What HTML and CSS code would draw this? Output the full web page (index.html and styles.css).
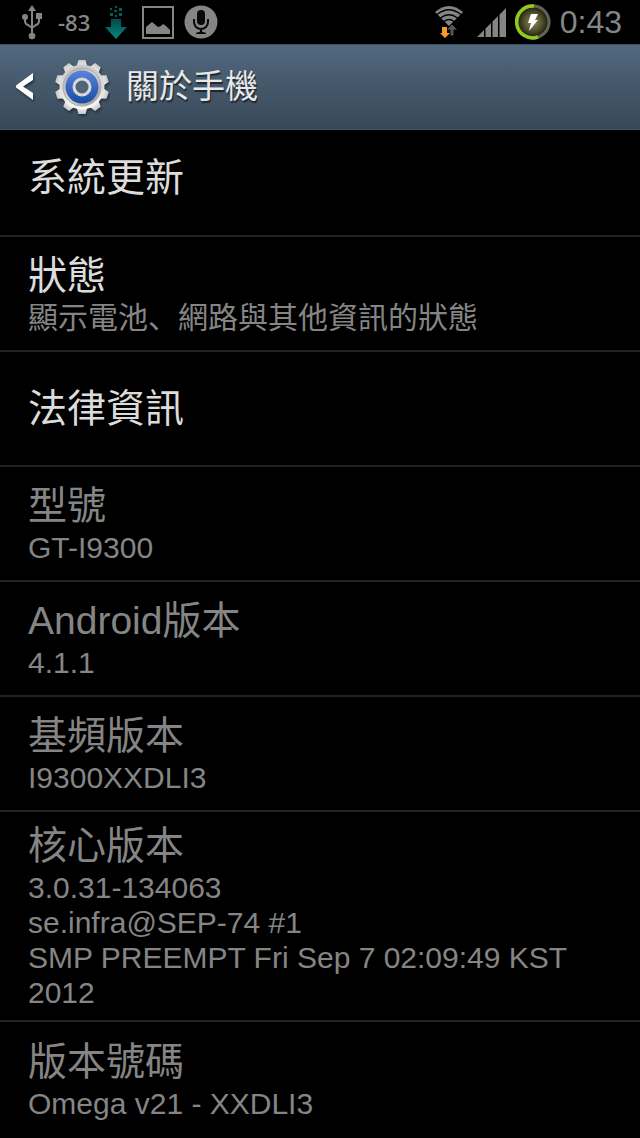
FILE: index.html
```html
<!DOCTYPE html>
<html lang="zh-Hant">
<head>
<meta charset="utf-8">
<meta name="viewport" content="width=device-width, initial-scale=1">
<title>關於手機</title>
<link rel="stylesheet" href="styles.css">
</head>
<body>
<div class="status-bar">
  <div class="status-group notifications">
    <svg class="icon-usb" viewBox="0 0 22 36" width="22" height="36" aria-hidden="true">
      <g fill="none" stroke="#858585" stroke-width="2"><path d="M11 5v26M4 13v4q0 3 3 4l4 3M18 12v5q0 3-3 4l-4 3"/></g>
      <g fill="#858585"><path d="M11 1l4 6H7z"/><circle cx="4" cy="13" r="3"/><path d="M15 9h6v6h-6z"/><circle cx="11" cy="32" r="3.3"/></g>
    </svg>
    <span class="signal-level">-83</span>
    <svg class="icon-download" viewBox="0 0 22 34" width="22" height="34" aria-hidden="true">
      <defs><linearGradient id="down" x1="0" y1="0" x2="0" y2="1"><stop offset="0" stop-color="#024b4a"/><stop offset="1" stop-color="#078783"/></linearGradient></defs>
      <path fill="url(#down)" d="M6 14h10v8h6L11 34 0 22h6z"/>
      <path fill="#045e5c" d="M5 3h2v2H5zM10 1h2v2h-2zM14 3h3v3h-3zM9 5h3v2H9zM5 8h3v3H5zM14 8h3v3h-3zM10 10h2v2h-2z"/>
    </svg>
    <svg class="icon-picture" viewBox="0 0 32 33" width="32" height="33" aria-hidden="true">
      <path fill="none" stroke="#858585" stroke-width="2" d="M1 1h30v31H1z"/>
      <path fill="#858585" d="M4 28v-7l6-5 6 5 3-1 2-2 3 2 4 4v4z"/>
    </svg>
    <svg class="icon-mic" viewBox="0 0 34 34" width="34" height="34" aria-hidden="true">
      <circle cx="17" cy="17" r="16.500" fill="#858585"/>
      <rect x="13" y="5" width="8" height="15" rx="4" fill="#080808"/>
      <path fill="none" stroke="#080808" stroke-width="2" d="M10 14v3a7 7 0 0 0 14 0v-3M17 24v4"/>
      <path fill="#080808" d="M12 28q5-3 10 0v1H12z"/>
    </svg>
  </div>
  <div class="status-group system">
    <svg class="icon-wifi" viewBox="0 0 28 34" width="28" height="34" aria-hidden="true">
      <path fill="#858585" d="M0 7Q14-5 28 7L14 21z"/>
      <path fill="none" stroke="#000" stroke-width="1.300" d="M2 9.500Q14 0 26 9.500M5.500 13Q14 6.500 22.500 13M9 16.500Q14 12.500 19 16.500"/>
      <path fill="#555" stroke="#000" d="M15 31v-6h-4l6-6 6 6h-4v6z"/>
      <path fill="#f79a28" d="M7 22h5v6h3l-5 5-5-5h2z"/>
    </svg>
    <svg class="icon-signal" viewBox="0 0 29 29" width="29" height="29" aria-hidden="true">
      <path fill="#858585" d="M0 29l7-7v7zM8.500 20.500L14 15v14H8.500zM15.500 13.500L21 8v21h-5.500zM22.500 6.500L29 0v29h-6.500z"/>
    </svg>
    <svg class="icon-battery" viewBox="0 0 36 38" width="36" height="38" aria-hidden="true">
      <defs><radialGradient id="glow"><stop offset="0" stop-color="#858265"/><stop offset=".5" stop-color="#62603a"/><stop offset="1" stop-color="#29290f"/></radialGradient></defs>
      <circle cx="18" cy="19" r="17.500" fill="#262a11"/>
      <circle cx="18" cy="19" r="14" fill="url(#glow)"/>
      <circle cx="18" cy="19" r="16" fill="none" stroke="#62625a" stroke-width="3"/>
      <path fill="none" stroke="#91c91e" stroke-width="3.500" d="M19 3A16 16 0 1 0 23 34"/>
      <path fill="#fff" d="M16 11h7l-3 6h3L14 28l2-8h-3z"/>
    </svg>
    <time class="clock">0:43</time>
  </div>
</div>

<header class="action-bar">
  <button class="back" type="button" aria-label="返回">
    <svg class="icon-back" viewBox="0 0 18 30" width="18" height="30" aria-hidden="true"><path fill="#fff" d="M17 1v7L7 14.500 17 21v7L0 15.500v-2z"/></svg>
    <svg class="icon-gear" viewBox="-28 -28 56 56" width="56" height="56" aria-hidden="true">
      <defs>
        <linearGradient id="metal" x1="0" y1="0" x2="0" y2="1"><stop offset="0" stop-color="#c8c8c8"/><stop offset=".5" stop-color="#dcdcdc"/><stop offset="1" stop-color="#fafafa"/></linearGradient>
        <linearGradient id="rim" x1="0" y1="0" x2="1" y2="1"><stop offset="0" stop-color="#aaa"/><stop offset=".5" stop-color="#d5d5d5"/><stop offset="1" stop-color="#8d8d8d"/></linearGradient>
        <linearGradient id="blue" x1="0" y1="0" x2="0" y2="1"><stop offset="0" stop-color="#5b82dd"/><stop offset="1" stop-color="#164da3"/></linearGradient>
        <path id="tooth" d="M-5.500-20L-3.500-27h7L5.500-20z"/>
      </defs>
      <g fill="url(#metal)">
        <use href="#tooth"/><use href="#tooth" transform="rotate(36)"/><use href="#tooth" transform="rotate(72)"/><use href="#tooth" transform="rotate(108)"/><use href="#tooth" transform="rotate(144)"/><use href="#tooth" transform="rotate(180)"/><use href="#tooth" transform="rotate(216)"/><use href="#tooth" transform="rotate(252)"/><use href="#tooth" transform="rotate(288)"/><use href="#tooth" transform="rotate(324)"/>
        <circle r="22.500"/>
      </g>
      <circle r="19" fill="url(#rim)" stroke="#aaa"/>
      <circle r="16.500" fill="url(#blue)"/>
      <circle r="8" fill="#506478" stroke="#d8d8d8" stroke-width="3"/>
    </svg>
  </button>
  <h1 class="page-title">關於手機</h1>
</header>

<main>
  <ul class="settings">
    <li class="row row-first"><button class="entry" type="button"><span class="title">系統更新</span></button></li>
    <li class="row"><button class="entry" type="button"><span class="title">狀態</span><span class="summary">顯示電池、網路與其他資訊的狀態</span></button></li>
    <li class="row"><button class="entry" type="button"><span class="title">法律資訊</span></button></li>
    <li class="row"><div class="entry info"><span class="title">型號</span><span class="summary">GT-I9300</span></div></li>
    <li class="row"><div class="entry info"><span class="title">Android版本</span><span class="summary">4.1.1</span></div></li>
    <li class="row"><div class="entry info"><span class="title">基頻版本</span><span class="summary">I9300XXDLI3</span></div></li>
    <li class="row"><div class="entry info"><span class="title">核心版本</span><span class="summary">3.0.31-134063<br>se.infra@SEP-74 #1<br>SMP PREEMPT Fri Sep 7 02:09:49 KST 2012</span></div></li>
    <li class="row"><div class="entry info"><span class="title">版本號碼</span><span class="summary">Omega v21 - XXDLI3</span></div></li>
  </ul>
</main>
</body>
</html>
```

FILE: styles.css
```css
* {
  box-sizing: border-box;
}

body {
  margin: 0;
  background: #000;
  color: #858585;
  font-family: "Liberation Sans", "Noto Sans CJK SC", sans-serif;
  font-feature-settings: "locl" 0;
}

button {
  border: 0;
  background: none;
  color: inherit;
  font: inherit;
  font-feature-settings: inherit;
  text-align: left;
}

svg {
  display: block;
  flex: none;
}

.status-bar {
  display: flex;
  justify-content: space-between;
  align-items: center;
  height: 44px;
  padding: 0 18px 0 21px;
}

.status-group {
  display: flex;
  align-items: center;
}

.notifications {
  gap: 15px;
}

.icon-mic {
  margin-left: -5px;
}

.signal-level {
  font: 600 22px "Open Sans", sans-serif;
}

.system {
  gap: 9px;
}

.icon-wifi {
  margin-right: 5px;
}

.clock {
  font-size: 32px;
}

.action-bar {
  display: flex;
  align-items: center;
  gap: 16px;
  height: 86px;
  padding: 0 16px;
  border-top: 1px solid #3a4c5c;
  border-bottom: 1px solid #415261;
  background: linear-gradient(#51687e, #384857);
}

.back {
  display: flex;
  align-items: center;
  gap: 20px;
  padding: 0;
}

.icon-back,
.icon-gear {
  filter: drop-shadow(1px 2px 1px #26323d);
}

.page-title {
  margin: 0;
  color: #e8e8e8;
  font-size: 33px;
  font-weight: 400;
  line-height: 48px;
  text-shadow: 1px 2px 1px #1d262e;
}

.settings {
  margin: 0;
  padding: 0;
  list-style: none;
}

.row {
  display: flex;
  min-height: 115px;
  border-bottom: 2px solid #222;
}

.row:last-child {
  border-bottom: 0;
}

.row-first {
  min-height: 107px;
  padding-bottom: 9px;
}

.entry {
  display: flex;
  flex: 1;
  flex-direction: column;
  justify-content: center;
  padding: 10px 28px;
}

.title {
  color: #dcdcdc;
  font-size: 39px;
  line-height: 48px;
}

.info .title {
  color: #858585;
}

.summary {
  font-size: 30px;
  line-height: 35px;
}
```
